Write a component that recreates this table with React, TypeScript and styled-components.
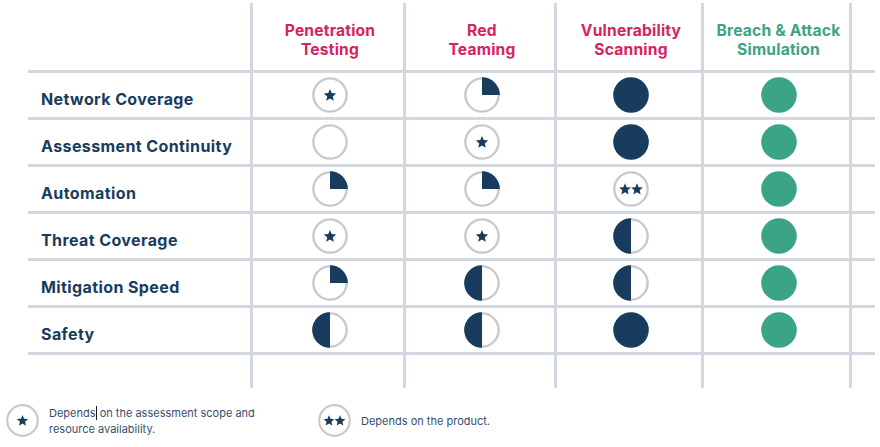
import React from "react";
import styled, { createGlobalStyle } from "styled-components";

const NAVY = "#173c5d";
const PINK = "#d6235f";
const GREEN = "#3ba487";
const LINE = "#d3d8e0";
const RING = "#c9c9c9";

const Global = createGlobalStyle`
  html, body { margin: 0; padding: 0; background: #ffffff; }
  body { font-family: Inter, "Noto Sans", Arial, sans-serif; }
`;

const Page = styled.div`
  width: 880px;
  height: 447px;
  box-sizing: border-box;
  padding-top: 3px;
  overflow: hidden;
`;

const Grid = styled.div`
  display: grid;
  grid-template-columns: 225px 153px 151px 147px 148px 23px;
  grid-template-rows: 70px repeat(6, 47px) 33px;
  margin-left: 28px;
  width: 847px;
`;

const Cell = styled.div<{ $last?: boolean; $bottom?: boolean }>`
  box-sizing: border-box;
  border-right: ${(p) => (p.$last ? "none" : `3px solid ${LINE}`)};
  border-bottom: ${(p) => (p.$bottom ? `3px solid ${LINE}` : "none")};
`;

const HeadCell = styled(Cell)<{ $color: string }>`
  display: flex;
  flex-direction: column;
  align-items: center;
  justify-content: center;
  padding: 6px 0 0 4px;
  text-align: center;
  color: ${(p) => p.$color};
  font-size: 15.6px;
  font-weight: 700;
  letter-spacing: 0.2px;
`;

const HeadLine = styled.span`
  display: block;
  height: 19px;
  line-height: 19px;
  white-space: nowrap;
`;

const Label = styled(Cell)`
  display: flex;
  align-items: center;
  padding: 7px 0 0 13px;
  color: ${NAVY};
  font-size: 16px;
  font-weight: 700;
  letter-spacing: 0.4px;
`;

const Mark = styled(Cell)`
  display: flex;
  align-items: center;
  justify-content: center;
  padding-left: 4px;
`;

const Legend = styled.div`
  display: flex;
  align-items: center;
  margin-top: 15px;
  padding-left: 5px;
`;

const LegendItem = styled.div<{ $width: number }>`
  display: flex;
  align-items: center;
  gap: 9px;
  width: ${(p) => p.$width}px;
`;

const LegendText = styled.div`
  font-size: 11px;
  line-height: 16px;
  padding-top: 1px;
  color: #34506f;
`;

const Caret = styled.span`
  display: inline-block;
  width: 0;
  height: 14px;
  border-left: 1px solid #1d1d1d;
  vertical-align: -3px;
`;

type Kind = "star" | "stars" | "empty" | "quarter" | "half" | "full" | "green";

const StarShape: React.FC<{ cx: number; cy: number; r: number }> = ({ cx, cy, r }) => {
  const pts: string[] = [];
  for (let i = 0; i < 10; i++) {
    const rad = i % 2 === 0 ? r : r * 0.45;
    const a = -Math.PI / 2 + (i * Math.PI) / 5;
    pts.push(`${(cx + rad * Math.cos(a)).toFixed(2)},${(cy + rad * Math.sin(a)).toFixed(2)}`);
  }
  return <polygon points={pts.join(" ")} fill={NAVY} />;
};

const Rating: React.FC<{ kind: Kind; size?: number }> = ({ kind, size = 38 }) => {
  const R = 18.75;
  return (
    <svg width={size} height={size} viewBox="0 0 40 40">
      {kind === "full" || kind === "green" ? (
        <circle cx="20" cy="20" r={R} fill={kind === "green" ? GREEN : NAVY} />
      ) : (
        <>
          <circle cx="20" cy="20" r="17.5" fill="#fff" stroke={RING} strokeWidth="2.5" />
          {kind === "quarter" && (
            <path d={`M20 20 L20 ${20 - R} A${R} ${R} 0 0 1 ${20 + R} 20 Z`} fill={NAVY} />
          )}
          {kind === "half" && (
            <path d={`M20 ${20 - R} A${R} ${R} 0 0 0 20 ${20 + R} Z`} fill={NAVY} />
          )}
          {kind === "star" && <StarShape cx={20} cy={20.5} r={6.8} />}
          {kind === "stars" && (
            <>
              <StarShape cx={13.7} cy={20.5} r={6.5} />
              <StarShape cx={26.3} cy={20.5} r={6.5} />
            </>
          )}
        </>
      )}
    </svg>
  );
};

const headers: { text: string[]; color: string }[] = [
  { text: ["Penetration", "Testing"], color: PINK },
  { text: ["Red", "Teaming"], color: PINK },
  { text: ["Vulnerability", "Scanning"], color: PINK },
  { text: ["Breach & Attack", "Simulation"], color: GREEN },
];

const rows: { label: string; marks: Kind[] }[] = [
  { label: "Network Coverage", marks: ["star", "quarter", "full", "green"] },
  { label: "Assessment Continuity", marks: ["empty", "star", "full", "green"] },
  { label: "Automation", marks: ["quarter", "quarter", "stars", "green"] },
  { label: "Threat Coverage", marks: ["star", "star", "half", "green"] },
  { label: "Mitigation Speed", marks: ["quarter", "half", "half", "green"] },
  { label: "Safety", marks: ["half", "half", "full", "green"] },
];

export default function App() {
  return (
    <>
      <Global />
      <Page>
        <Grid>
          <Cell $bottom />
          {headers.map((h) => (
            <HeadCell key={h.text[0]} $color={h.color} $bottom>
              <HeadLine>{h.text[0]}</HeadLine>
              <HeadLine>{h.text[1]}</HeadLine>
            </HeadCell>
          ))}
          <Cell $last $bottom />
          {rows.map((r) => (
            <React.Fragment key={r.label}>
              <Label $bottom>{r.label}</Label>
              {r.marks.map((m, i) => (
                <Mark key={i} $bottom>
                  <Rating kind={m} />
                </Mark>
              ))}
              <Cell $last $bottom />
            </React.Fragment>
          ))}
          <Cell />
          <Cell />
          <Cell />
          <Cell />
          <Cell />
          <Cell $last />
        </Grid>
        <Legend>
          <LegendItem $width={312}>
            <Rating kind="star" size={35} />
            <LegendText>
              Depends<Caret /> on the assessment scope and
              <br />
              resource availability.
            </LegendText>
          </LegendItem>
          <LegendItem $width={250}>
            <Rating kind="stars" size={35} />
            <LegendText>Depends on the product.</LegendText>
          </LegendItem>
        </Legend>
      </Page>
    </>
  );
}
